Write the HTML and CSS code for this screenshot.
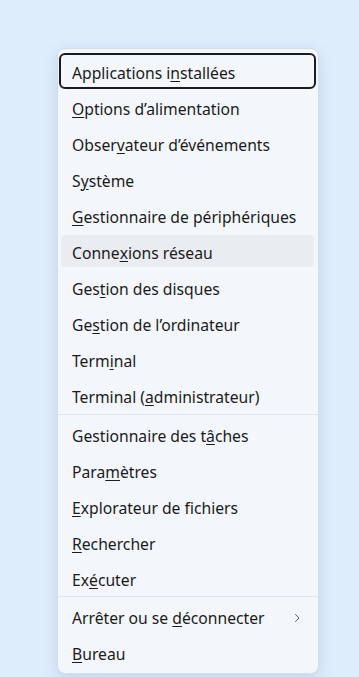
FILE: index.html
```html
<!DOCTYPE html>
<html lang="fr">
<head>
<meta charset="utf-8">
<link rel="stylesheet" href="styles.css">
</head>
<body>
<div class="menu">
  <div class="item focus">Applications i<u>n</u>stallées</div>
  <div class="item"><u>O</u>ptions d’alimentation</div>
  <div class="item">Obser<u>v</u>ateur d’événements</div>
  <div class="item">S<u>y</u>stème</div>
  <div class="item"><u>G</u>estionnaire de périphériques</div>
  <div class="item hover">Conne<u>x</u>ions réseau</div>
  <div class="item">Ges<u>t</u>ion des disques</div>
  <div class="item">Ge<u>s</u>tion de l’ordinateur</div>
  <div class="item">Term<u>i</u>nal</div>
  <div class="item">Terminal (<u>a</u>dministrateur)</div>
  <div class="sep"></div>
  <div class="item">Gestionnaire des t<u>â</u>ches</div>
  <div class="item">Para<u>m</u>ètres</div>
  <div class="item"><u>E</u>xplorateur de fichiers</div>
  <div class="item"><u>R</u>echercher</div>
  <div class="item">Ex<u>é</u>cuter</div>
  <div class="sep sep2"></div>
  <div class="item sub"><span>Arrêter ou se <u>d</u>éconnecter</span>
    <svg class="chev" width="8" height="10" viewBox="0 0 8 10"><path d="M2.5 1.5 L6 5 L2.5 8.5" fill="none" stroke="#5a5f66" stroke-width="1" stroke-linecap="round" stroke-linejoin="round"/></svg>
  </div>
  <div class="item"><u>B</u>ureau</div>
</div>
</body>
</html>
```

FILE: styles.css
```css
html, body {
  margin: 0;
  padding: 0;
  background: #deedfc;
  width: 359px;
  height: 677px;
  overflow: hidden;
}
body {
  font-family: "Noto Sans", "Open Sans", sans-serif;
  font-size: 15.7px;
  color: #1b1b1b;
}
.menu {
  margin: 48px 0 0 57px;
  width: 262px;
  box-sizing: border-box;
  padding: 4px 0 3px;
  display: flex;
  flex-direction: column;
  background: #f3f7fc;
  border: 1px solid #d3dde8;
  border-radius: 8px;
  box-shadow: 0 4px 14px rgba(60, 100, 150, 0.18);
}
.item {
  height: 32px;
  margin: 2px 4px 2px 3px;
  padding: 3px 11px 0 11px;
  display: flex;
  align-items: center;
  line-height: 20px;
  box-sizing: border-box;
  border-radius: 4px;
  white-space: nowrap;
}
.item u {
  text-decoration-thickness: 1px;
  text-underline-offset: 2px;
}
.focus {
  outline: 2px solid #1b1b1b;
  outline-offset: 0;
}
.hover {
  background: #e9edf2;
}
.sep {
  height: 1px;
  background: #dfe4ea;
  margin: 1px 0 1px;
}
.sep2 {
  margin: 0 0 1px;
}
.sub {
  justify-content: space-between;
}
.chev {
  margin-right: 2px;
}
```
